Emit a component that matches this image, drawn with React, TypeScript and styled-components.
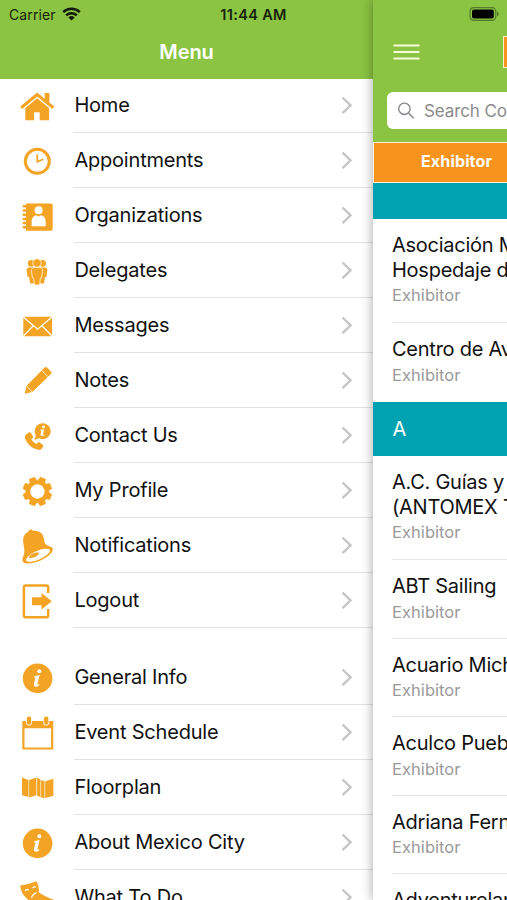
import React from 'react';
import styled, { createGlobalStyle } from 'styled-components';

const GREEN = '#8ac442';
const AMBER = '#f3a424';
const TEAL = '#00a1b1';

const Global = createGlobalStyle`
  *, *::before, *::after { box-sizing: border-box; }
  html, body { margin: 0; padding: 0; overflow: hidden; background: #fff; }
  body { font-family: Inter, "Liberation Sans", sans-serif; color: #111; }
`;

const Screen = styled.div`
  position: relative;
  display: flex;
  width: 507px;
  height: 900px;
  overflow: hidden;
  background: #fff;
`;

/* ---------- status bar ---------- */
const StatusBar = styled.div`
  position: absolute;
  z-index: 3;
  top: 0;
  left: 0;
  right: 0;
  height: 28px;
  padding: 0 7px 0 9px;
  display: grid;
  grid-template-columns: 1fr auto 1fr;
  align-items: center;
  color: #16210a;
  font-size: 14px;
`;
const Carrier = styled.div`
  display: flex;
  align-items: center;
  gap: 6px;
  letter-spacing: 0.1px;
`;
const Clock = styled.div`
  margin-right: 2px;
  font-size: 14.5px;
  font-weight: 600;
  letter-spacing: 0.35px;
`;
const Battery = styled.div`
  display: flex;
  justify-content: flex-end;
  margin-top: -1px;
`;

/* ---------- side menu ---------- */
const Menu = styled.nav`
  flex: 0 0 373px;
  height: 900px;
  overflow: hidden;
`;
const MenuHeader = styled.header`
  height: 79px;
  padding-top: 26px;
  background: ${GREEN};
  color: #fff;
  font-size: 20px;
  line-height: 52px;
  font-weight: 600;
  letter-spacing: -0.1px;
  text-align: center;
`;
const MenuGroup = styled.div<{ $gap: number }>`
  margin-top: ${p => p.$gap}px;
`;
const MenuRow = styled.div`
  display: flex;
  align-items: center;
  height: 55px;
  padding-left: 17px;
`;
const IconBox = styled.svg`
  flex: none;
  display: block;
  width: 40px;
  height: 40px;
  fill: ${AMBER};
`;
const MenuCell = styled.div`
  flex: 1;
  height: 55px;
  margin-left: 17px;
  padding-right: 20px;
  display: flex;
  align-items: center;
  justify-content: space-between;
  border-bottom: 1px solid #e2e2e2;
`;
const MenuLabel = styled.span`
  font-size: 20px;
  line-height: 24px;
  letter-spacing: -0.2px;
  padding-left: 0.4px;
  white-space: nowrap;
`;

/* ---------- directory panel ---------- */
const Panel = styled.main`
  position: relative;
  z-index: 1;
  flex: 1;
  min-width: 0;
  height: 900px;
  overflow: visible;
  background: #fff;
  box-shadow: 0 0 11px rgba(0, 0, 0, 0.36);
`;
const PanelHeader = styled.header`
  height: 142px;
  background: ${GREEN};
  overflow: hidden;
`;
const NavBar = styled.div`
  display: flex;
  align-items: center;
  justify-content: space-between;
  height: 48px;
  margin-top: 28px;
  padding-left: 20px;
`;
const LogoEdge = styled.div`
  width: 4px;
  height: 32px;
  border: 1px solid #fff3c8;
  border-right: 0;
  background: #f7941d;
`;
const Search = styled.div`
  display: flex;
  align-items: center;
  gap: 8px;
  width: 480px;
  height: 37px;
  margin: 16px 0 0 14px;
  padding-left: 10px;
  border-radius: 6px;
  background: #fff;
  color: #8b8b8b;
  font-size: 17px;
  letter-spacing: -0.1px;
  white-space: nowrap;
`;
const Segment = styled.div`
  height: 41px;
  padding-left: 47px;
  border: 1.5px solid #fff3dc;
  border-right: 0;
  background: #f8941e;
  color: #fff;
  font-size: 16px;
  font-weight: 700;
  letter-spacing: 0.15px;
  line-height: 37px;
`;
const SectionBar = styled.div<{ $h: number }>`
  height: ${p => p.$h}px;
  padding-left: 19.5px;
  background: ${TEAL};
  color: #fff;
  font-size: 20px;
  line-height: ${p => p.$h}px;
`;
const Entry = styled.article<{ $h: number; $line?: boolean }>`
  height: ${p => p.$h}px;
  margin-left: 19px;
  padding-top: 14px;
  overflow: hidden;
  border-bottom: 1px solid ${p => (p.$line === false ? 'transparent' : '#e4e4e4')};
`;
const EntryTitle = styled.div`
  font-size: 20px;
  line-height: 24.5px;
  letter-spacing: -0.25px;
  white-space: pre;
`;
const EntryKind = styled.div`
  margin-top: 3px;
  color: #9a9a9a;
  font-size: 16.5px;
  letter-spacing: 0.05px;
  line-height: 20px;
`;

/* ---------- icons ---------- */
const InfoGlyph = () => (
  <>
    <circle cx="20.6" cy="20.4" r="14.8" />
    <circle cx="22.3" cy="13.2" r="2" fill="#fff" />
    <path d="M17.2 18.2l5.4-1.1-2.2 8.9c-.2 1 .6 1 2.1.1l-.4 1.4c-2.5 2-6 1.6-5.1-1.8l1.5-6.2-1.6-.3z" fill="#fff" />
  </>
);

const gear = (() => {
  const pts: string[] = [];
  for (let i = 0; i < 8; i++) {
    const a = (i * Math.PI) / 4 + Math.PI / 8;
    [[-0.3, 11.4], [-0.19, 14.6], [0.19, 14.6], [0.3, 11.4]].forEach(([d, r]) =>
      pts.push(`${(20.4 + r * Math.cos(a + d)).toFixed(2)} ${(20.5 + r * Math.sin(a + d)).toFixed(2)}`));
  }
  return 'M' + pts.join('L') + 'Z';
})();

const icons: Record<string, React.ReactNode> = {
  home: (
    <>
      <path d="M20.2 6.5L3.2 20.6l2 2.3L20.2 10.6l15.2 12.3 2-2.3-5-4.2V7h-4.7v5.7z" />
      <path d="M20.2 12.2L8.3 22v12.3h8.8v-8h5.6v8h9.4V22z" />
    </>
  ),
  clock: (
    <>
      <circle cx="20.3" cy="20.3" r="12" fill="none" stroke={AMBER} strokeWidth="3" />
      <path d="M20.3 13.2v7.6l6-2.6" fill="none" stroke={AMBER} strokeWidth="1.7" />
    </>
  ),
  contacts: (
    <>
      <path d="M9 7.5h24.7a2 2 0 0 1 2 2v23.3a2 2 0 0 1-2 2H9z" />
      <path d="M6.800 10.300h4M6.800 14.500h4M6.800 18.700h4M6.800 22.900h4M6.800 27.100h4M6.800 31.300h4" stroke={AMBER} strokeWidth="2.500" strokeLinecap="round" />
      <circle cx="21.600" cy="14.300" r="4" fill="#fff" />
      <path d="M14.600 30.300v-4.600c0-3.800 2-6 4.500-6.400l2.500 1.300 2.500-1.300c2.600.4 4.600 2.600 4.600 6.400v4.600z" fill="#fff" />
    </>
  ),
  people: (
    <>
      <circle cx="14.2" cy="12.3" r="3.4" />
      <circle cx="25.6" cy="12.3" r="3.4" />
      <path d="M9.6 19c0-1.5 1-2.5 2.6-2.5h15.6c1.6 0 2.6 1 2.6 2.5l-1 7h-1.500l-1 6.500h-3.200L20 29l-3.700 3.500h-3.200l-1-6.500h-1.500z" />
      <g stroke="#fff" strokeWidth=".7">
        <circle cx="20" cy="12" r="4.200" />
        <path d="M14.400 19.600c0-1.800 1.200-3 3-3h5.200c1.800 0 3 1.200 3 3l-1 7.400h-1.200l-.8 7h-5.200l-.8-7h-1.200z" />
      </g>
    </>
  ),
  mail: (
    <>
      <rect x="6.3" y="10.8" width="28.7" height="19.4" rx="1" />
      <path d="M6.5 11.2l14.1 12 14.1-12M6.6 29.8l9.7-10M34.7 29.8l-9.7-10" fill="none" stroke="#fff" strokeWidth="1.3" />
    </>
  ),
  pencil: (
    <>
      <path d="M7.800 32.700l1.600-7.800L27.300 6.800c1-1 2-1 3 0l3.400 3.400c1 1 1 2 0 3L15.300 31z" />
      <path d="M24.600 9.300l6.600 6.600M9.600 25l5.600 5.900" fill="none" stroke="#fff" strokeWidth=".8" />
    </>
  ),
  phone: (
    <>
      <path d="M9.2 18.4l2.5-1.8c.8-.5 1.7-.3 2.2.4l2 3.2c.5.8.2 1.7-.6 2.2l-1 .7c1 2.2 2.8 4 5.2 5l.9-1.1c.6-.8 1.500-.9 2.300-.4l2.800 2c.8.6 1 1.500.4 2.300l-1.500 2c-1 1.200-3.400 1.200-6 .2-4.600-1.800-8.200-5.400-9.900-9.600-.9-2.400-.6-4.300.7-5.100z" />
      <circle cx="25.700" cy="15.200" r="8" />
      <path d="M19 18.500l-1.500 5.500 5-2z" />
      <circle cx="26.500" cy="10.900" r="1.400" fill="#fff" />
      <path d="M23.200 13.800l4-.6-1.300 5.500 1.500-.2-.3 1.200c-1.800.8-4 .5-3.500-1.500l.9-3.500-1.300-.1z" fill="#fff" />
    </>
  ),
  gear: (
    <>
      <path d={gear} stroke={AMBER} strokeWidth=".8" strokeLinejoin="round" />
      <circle cx="20.4" cy="20.5" r="7.2" fill="#fff" />
    </>
  ),
  bell: (
    <>
      <path d="M11.300 5.800c.5-2.700 3.800-3 4.600-1 5.700-.4 9.500 1.900 10.600 6.200.9 4 .6 6.200 3.600 8.200 2.200 1.200 5.200 1.300 5.700 3.600.6 3.200-4.800 8.200-11.300 11.300-7.300 3.500-16 4.600-18.400 1.800-1.800-2.400.7-5.600 1.200-9.200.6-4.600-1.400-8-1.200-12.700.1-4 2-6.800 5.200-8.200z" />
      <ellipse cx="21" cy="29.300" rx="12.900" ry="4.300" transform="rotate(-24 21 29.300)" fill="#fff" />
      <path d="M11.600 32c1.300-3.400 5-5.800 10.600-5.400-.7 3.200-4.800 6-10.600 5.400z" />
    </>
  ),
  logout: (
    <>
      <path d="M31.2 12V6.500a2 2 0 0 0-2-2H8.900a2 2 0 0 0-2 2v27.700a2 2 0 0 0 2 2h20.300a2 2 0 0 0 2-2V28" fill="none" stroke={AMBER} strokeWidth="2.5" />
      <path d="M15 16.200h9.500v-4.300l10.300 8.300-10.300 8.300v-4.300H15z" />
    </>
  ),
  info: <InfoGlyph />,
  calendar: (
    <>
      <path d="M5.3 8h31v28.600h-31zM7.500 15.200v19.400h26.600V15.200z" fillRule="evenodd" />
      <rect x="9.4" y="3" width="5.2" height="9.2" rx="2.5" stroke="#fff" strokeWidth=".9" />
      <rect x="26.6" y="3" width="5.2" height="9.2" rx="2.5" stroke="#fff" strokeWidth=".9" />
    </>
  ),
  map: (
    <path d="M5 9.6l6.500 2.300v17L5 27.300zM12.100 11.900l7.300-2.400v17.700l-7.300 2.300zM20.100 9.600l3.400 2v17.900l-3.400-2.200zM24.100 11.900l3.400 1.400v16.900l-3.400-1zM28.200 13.300l8.200-2.500v17l-8.200 2.300z" />
  ),
  masks: (
    <>
      <path d="M3.2 7.500C9 6.800 14.500 5 19.500 3.200c1.600 3 2.500 6.500 2.500 10l-8.500 10c-6-3.500-9.800-9-10.300-15.700z" />
      <path d="M8 12.800q1.800-2 4-.8M15.500 10.200q1.500-1.800 3.300-1M14.500 19.500q2-4.500 6-4.500" fill="none" stroke="#fff" strokeWidth="1.3" />
      <path d="M20.500 13.500c5 3.500 10.500 6.200 17 8.500-1 8-8 14-17 14-6-3-7.500-9-5.500-15z" />
    </>
  ),
};

const Icon = ({ name }: { name: string }) => <IconBox viewBox="0 0 40 40">{icons[name]}</IconBox>;

const Chevron = () => (
  <svg width="12" height="20" viewBox="0 0 12 20" fill="none" stroke="#c6c6c8" strokeWidth="2.4">
    <path d="M1.500 2.500L9.600 10.300 1.500 18.100" />
  </svg>
);

const primary: [string, string][] = [
  ['home', 'Home'], ['clock', 'Appointments'], ['contacts', 'Organizations'], ['people', 'Delegates'],
  ['mail', 'Messages'], ['pencil', 'Notes'], ['phone', 'Contact Us'], ['gear', 'My Profile'],
  ['bell', 'Notifications'], ['logout', 'Logout'],
];
const secondary: [string, string][] = [
  ['info', 'General Info'], ['calendar', 'Event Schedule'], ['map', 'Floorplan'],
  ['info', 'About Mexico City'], ['masks', 'What To Do'],
];

const Rows = ({ items, gap }: { items: [string, string][]; gap: number }) => (
  <MenuGroup $gap={gap}>
    {items.map(([icon, label]) => (
      <MenuRow key={label}>
        <Icon name={icon} />
        <MenuCell>
          <MenuLabel>{label}</MenuLabel>
          <Chevron />
        </MenuCell>
      </MenuRow>
    ))}
  </MenuGroup>
);

const Item = ({ title, h, line }: { title: string; h: number; line?: boolean }) => (
  <Entry $h={h} $line={line}>
    <EntryTitle>{title}</EntryTitle>
    <EntryKind>Exhibitor</EntryKind>
  </Entry>
);

export default function App() {
  return (
    <>
      <Global />
      <Screen>
        <StatusBar>
          <Carrier>
            Carrier
            <svg width="19" height="14" viewBox="0 0 19 14" fill="none" stroke="#111a08" strokeWidth="2.5">
              <path d="M1.2 5.200a12 12 0 0 1 16.600 0M4.200 8.300a7.700 7.700 0 0 1 10.600 0" />
              <path d="M9.500 13.600L6.400 10.500a4.500 4.500 0 0 1 6.200 0z" fill="#111a08" stroke="none" />
            </svg>
          </Carrier>
          <Clock>11:44 AM</Clock>
          <Battery>
            <svg width="31" height="14" viewBox="0 0 31 14">
              <rect x="1" y=".6" width="25.800" height="12.800" rx="3.800" fill="none" stroke="#55792c" strokeWidth="1.200" />
              <rect x="3" y="2.500" width="21.800" height="9" rx="2" fill="#000" />
              <path d="M28 4.700c2.300.6 2.300 4 0 4.600z" fill="#55792c" />
            </svg>
          </Battery>
        </StatusBar>

        <Menu>
          <MenuHeader>Menu</MenuHeader>
          <Rows items={primary} gap={-1} />
          <Rows items={secondary} gap={22} />
        </Menu>

        <Panel>
          <PanelHeader>
            <NavBar>
              <svg width="27" height="18" viewBox="0 0 27 18" stroke="#f6fbdc" strokeWidth="2.2">
                <path d="M.5 2.500h26M.5 9h26M.5 15.500h26" />
              </svg>
              <LogoEdge />
            </NavBar>
            <Search>
              <svg width="19" height="19" viewBox="0 0 19 19" fill="none" stroke="#85858a" strokeWidth="1.4">
                <circle cx="7.4" cy="7.8" r="5.700" />
                <path d="M11.600 12l5.200 5.200" />
              </svg>
              Search Companies
            </Search>
          </PanelHeader>
          <Segment>Exhibitor</Segment>
          <SectionBar $h={36} />
          <Item h={104} title={'Asociación Mexicana de\nHospedaje de México'} />
          <Item h={79} title="Centro de Aventura" line={false} />
          <SectionBar $h={54}>A</SectionBar>
          <Item h={104} title={'A.C. Guías y Turismo\n(ANTOMEX Travel)'} />
          <Item h={78.6} title="ABT Sailing" />
          <Item h={78.6} title="Acuario Michin" />
          <Item h={78.6} title="Aculco Pueblo Mágico" />
          <Item h={78.6} title="Adriana Fernández" />
          <Item h={78.6} title="Adventureland" />
        </Panel>
      </Screen>
    </>
  );
}
